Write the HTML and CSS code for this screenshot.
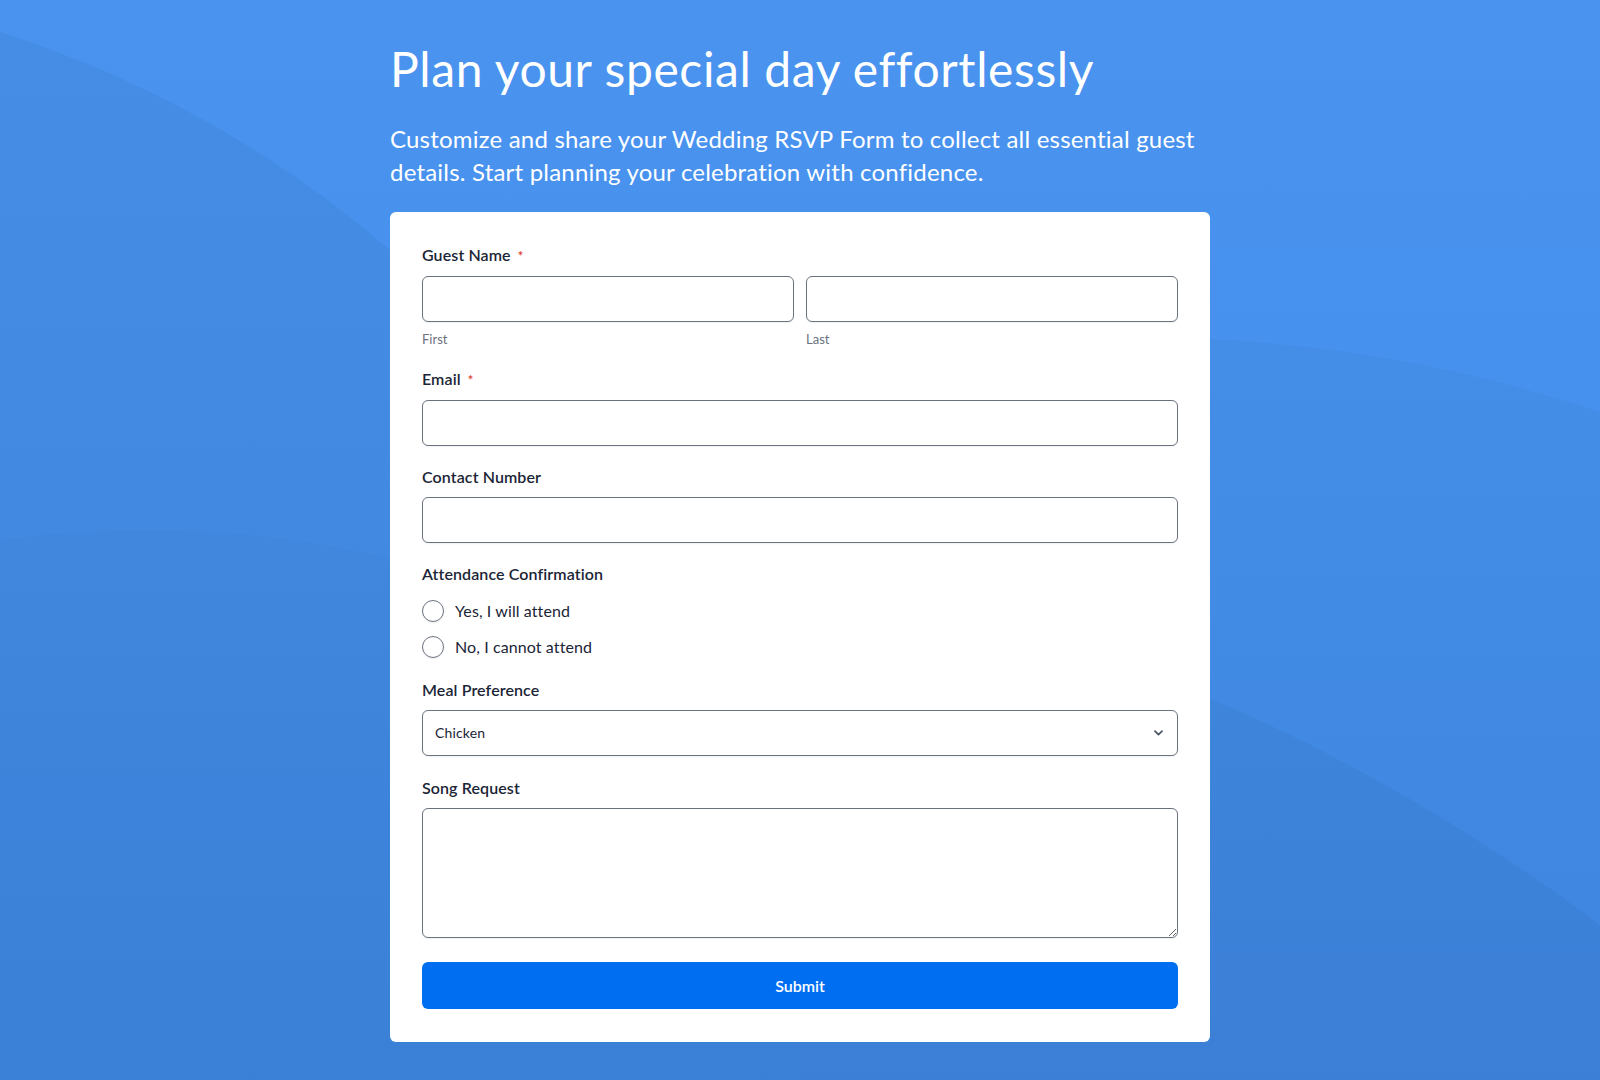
FILE: index.html
```html
<!DOCTYPE html>
<html lang="en">
<head>
<meta charset="utf-8">
<title>Wedding RSVP Form</title>
<link rel="stylesheet" href="styles.css">
</head>
<body>
<main class="page">
  <header class="intro">
    <h1 class="title">Plan your special day effortlessly</h1>
    <p class="lead">Customize and share your Wedding RSVP Form to collect all essential guest details. Start planning your celebration with confidence.</p>
  </header>
  <form class="card">
    <div class="field">
      <label class="label">Guest Name <span class="req">*</span></label>
      <div class="name-row">
        <div class="name-col">
          <input class="input" type="text">
          <span class="sublabel">First</span>
        </div>
        <div class="name-col">
          <input class="input" type="text">
          <span class="sublabel">Last</span>
        </div>
      </div>
    </div>
    <div class="field">
      <label class="label">Email <span class="req">*</span></label>
      <input class="input" type="email">
    </div>
    <div class="field">
      <label class="label">Contact Number</label>
      <input class="input" type="tel">
    </div>
    <div class="field">
      <label class="label">Attendance Confirmation</label>
      <div class="radios">
        <label class="radio"><span class="circle"></span>Yes, I will attend</label>
        <label class="radio"><span class="circle"></span>No, I cannot attend</label>
      </div>
    </div>
    <div class="field field-meal">
      <label class="label">Meal Preference</label>
      <div class="select">
        <span>Chicken</span>
        <svg class="chev" width="9" height="6" viewBox="0 0 9 6"><path d="M1 1.2 L4.5 4.6 L8 1.2" fill="none" stroke="#4b5563" stroke-width="1.7" stroke-linecap="round" stroke-linejoin="round"/></svg>
      </div>
    </div>
    <div class="field field-song">
      <label class="label">Song Request</label>
      <textarea class="textarea"></textarea>
    </div>
    <button class="submit" type="button">Submit</button>
  </form>
</main>
</body>
</html>
```

FILE: styles.css
```css
* { box-sizing: border-box; }
html, body { margin: 0; height: 100%; }
body {
  font-family: Lato, "Noto Sans", sans-serif;
  color: #1b2536;
  background-color: #4690ec;
  background-image:
    url("data:image/svg+xml;utf8,<svg xmlns='http://www.w3.org/2000/svg' viewBox='0 0 1600 1080' preserveAspectRatio='none'><path d='M0 32 C230 105 400 240 520 380 C650 530 760 800 790 1000 L800 1080 L0 1080 Z' fill='black' fill-opacity='0.045'/><path d='M0 540 C150 520 300 530 430 570 C600 640 740 850 790 1000 L800 1080 L0 1080 Z' fill='black' fill-opacity='0.012'/><path d='M1600 412 C1480 372 1350 345 1190 338 C1050 335 830 700 790 1000 L800 1080 L1600 1080 Z' fill='black' fill-opacity='0.025'/><path d='M1600 925 C1500 850 1360 760 1190 690 C1100 660 850 800 790 1000 L800 1080 L1600 1080 Z' fill='black' fill-opacity='0.032'/></svg>"),
    linear-gradient(180deg, #4a94f0 0%, #4590ec 50%, #3f88e4 100%);
  background-size: 100% 100%;
  overflow: hidden;
}
.page {
  width: 820px;
  margin: 0 auto;
  padding-top: 40px;
}
.intro { color: #fff; }
.title {
  margin: 0;
  font-size: 48px;
  font-weight: 400;
  line-height: 1.2;
  letter-spacing: 0.6px;
}
.lead {
  margin: 24px 0 23px;
  font-size: 24px;
  line-height: 1.4;
  font-weight: 400;
  letter-spacing: 0.2px;
}
.card {
  background: #fff;
  border-radius: 6px;
  padding: 33px 32px 33px;
  display: flex;
  flex-direction: column;
  gap: 21px;
}
.field { display: flex; flex-direction: column; }
.field-meal { margin-top: 1px; }
.field-song { margin-top: 1px; }
.label {
  font-size: 16px;
  line-height: 20px;
  font-weight: 600;
  color: #1b2536;
  margin-bottom: 10px;
  letter-spacing: 0.1px;
}
.req { color: #e0391f; font-size: 13px; margin-left: 3px; }
.name-row { display: flex; gap: 12px; }
.name-col { flex: 1; display: flex; flex-direction: column; }
.input, .select, .textarea {
  width: 100%;
  height: 46px;
  border: 1px solid #6b7280;
  border-radius: 6px;
  background: #fff;
  font-family: inherit;
  box-shadow: 0 1px 2px rgba(0,0,0,0.06);
}
.sublabel {
  font-size: 13px;
  line-height: 18px;
  color: #6b7280;
  margin-top: 8px;
}
.radios { display: flex; flex-direction: column; gap: 14px; padding-top: 6px; }
.radio {
  display: flex;
  align-items: center;
  gap: 11px;
  font-size: 16px;
  line-height: 22px;
  color: #1b2536;
  letter-spacing: 0.1px;
}
.circle {
  width: 22px;
  height: 22px;
  border: 1px solid #6b7280;
  border-radius: 50%;
  flex: none;
  box-shadow: 0 1px 2px rgba(0,0,0,0.08);
}
.select {
  display: flex;
  align-items: center;
  justify-content: space-between;
  padding: 0 14px 0 12px;
  font-size: 14px;
  color: #1b2536;
  letter-spacing: 0.15px;
}
.textarea {
  height: 130px;
  resize: vertical;
  display: block;
}
.submit {
  margin-top: 3px;
  height: 47px;
  width: 100%;
  border: none;
  border-radius: 6px;
  background: #006ef1;
  color: #fff;
  font-family: inherit;
  font-size: 16px;
  font-weight: 600;
}
```
